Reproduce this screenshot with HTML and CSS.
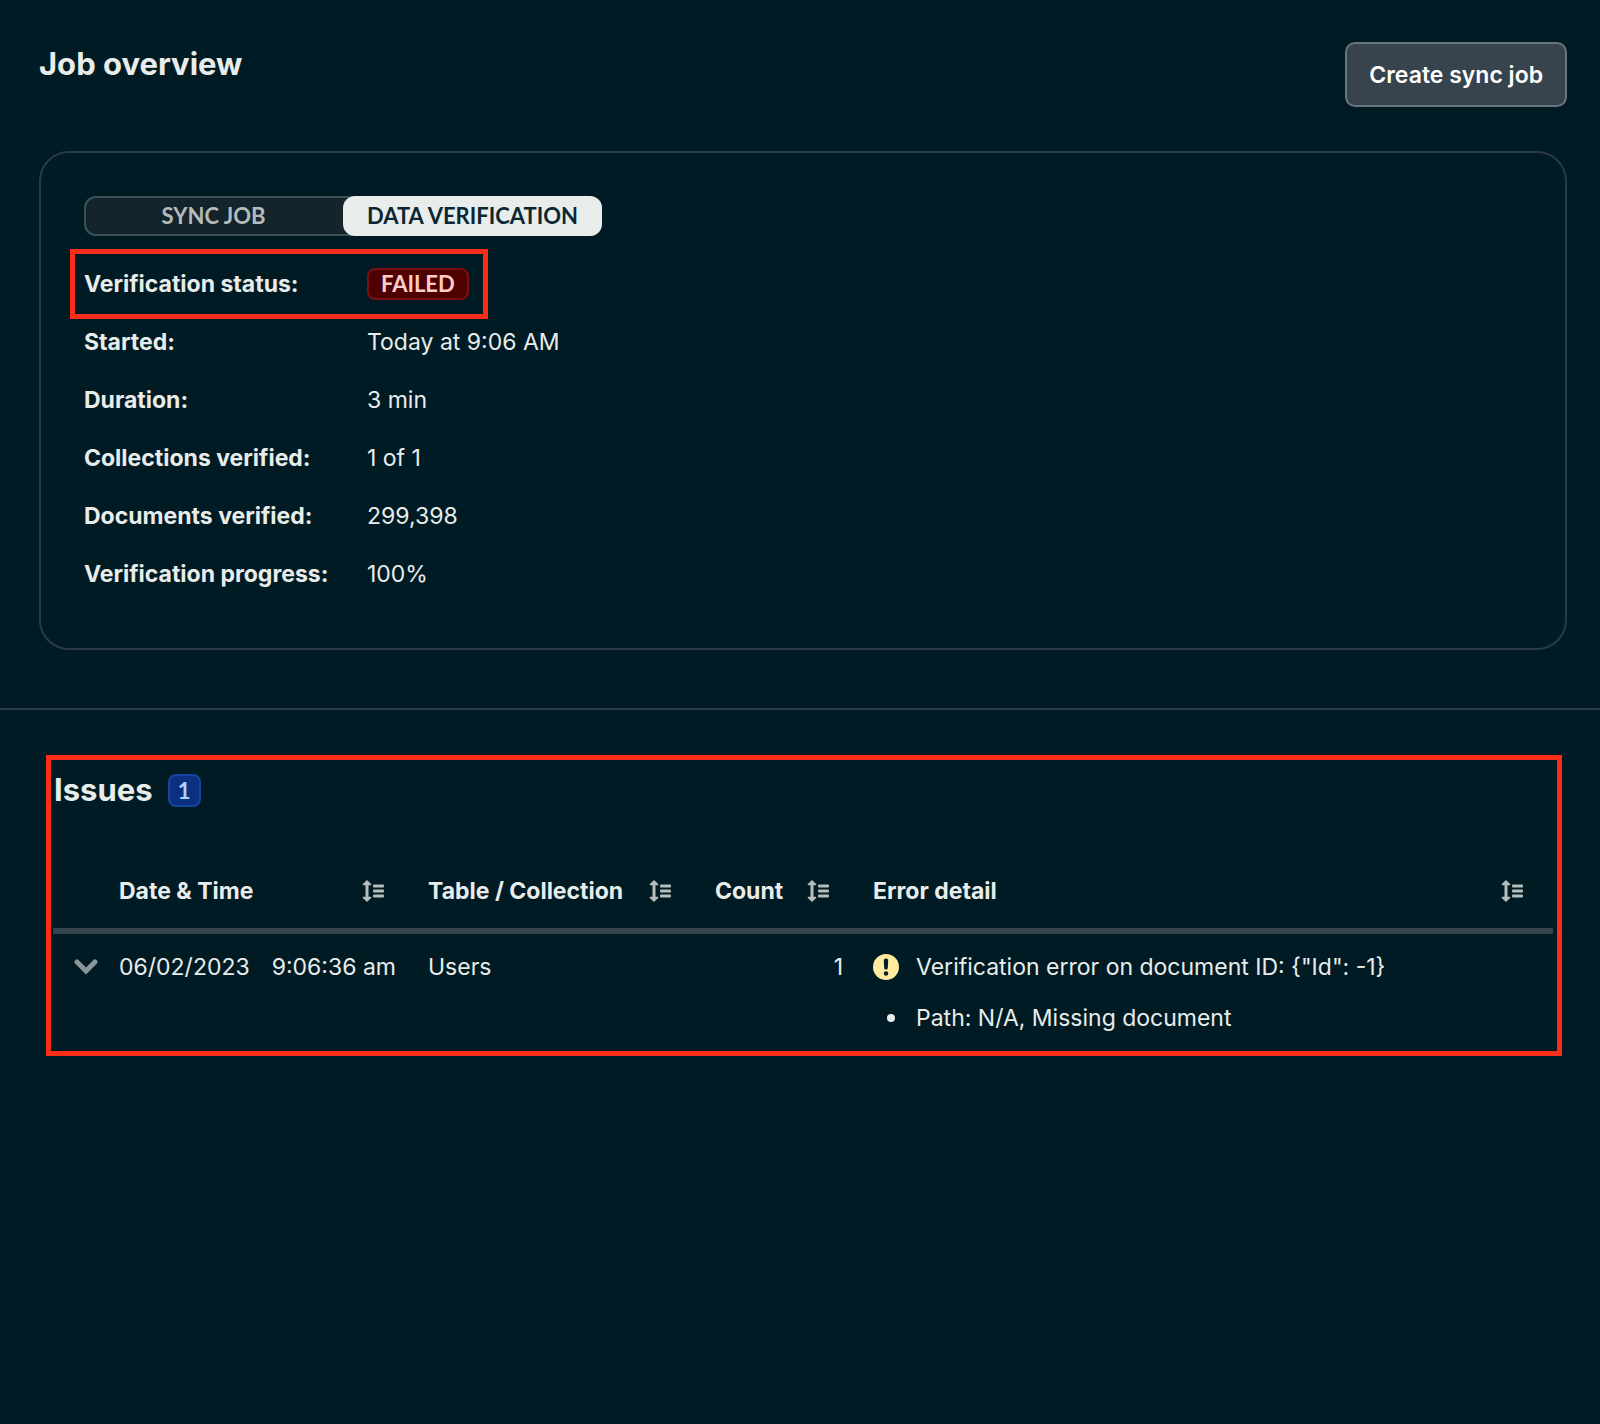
FILE: index.html
```html
<!DOCTYPE html>
<html lang="en">
<head>
<meta charset="utf-8">
<meta name="viewport" content="width=device-width, initial-scale=1">
<title>Job overview</title>
<link rel="stylesheet" href="styles.css">
</head>
<body>
<svg class="sprite" aria-hidden="true">
  <symbol id="sort" viewBox="0 0 22 22">
    <path d="M5 0 9.400 4.300Q9.400 5.200 8.600 5.200H6.500V16.800H8.600Q9.400 16.800 9.400 17.700L5 22 .6 17.700Q.6 16.800 1.400 16.800H3.500V5.200H1.400Q.6 5.200 .6 4.300Z"/>
    <rect x="11" y="4.500" width="11" height="3" rx="1"/>
    <rect x="11" y="9.500" width="11" height="3" rx="1"/>
    <rect x="11" y="14.500" width="11" height="3" rx="1"/>
  </symbol>
</svg>
<main>
  <section class="overview">
    <header class="overview-header">
      <h1>Job overview</h1>
      <button class="primary" type="button">Create sync job</button>
    </header>
    <div class="card">
      <div class="toggle" role="tablist">
        <button type="button" role="tab" aria-selected="false">SYNC JOB</button>
        <button class="active" type="button" role="tab" aria-selected="true">DATA VERIFICATION</button>
      </div>
      <dl class="details">
        <div class="row highlight"><dt>Verification status:</dt><dd><span class="badge failed">FAILED</span></dd></div>
        <div class="row"><dt>Started:</dt><dd>Today at 9:06 AM</dd></div>
        <div class="row"><dt>Duration:</dt><dd>3 min</dd></div>
        <div class="row"><dt>Collections verified:</dt><dd>1 of 1</dd></div>
        <div class="row"><dt>Documents verified:</dt><dd>299,398</dd></div>
        <div class="row"><dt>Verification progress:</dt><dd>100%</dd></div>
      </dl>
    </div>
  </section>
  <section class="issues">
    <header class="issues-header">
      <h2>Issues</h2>
      <span class="badge count">1</span>
    </header>
    <table>
      <colgroup><col class="col-toggle"><col class="col-date"><col class="col-name"><col class="col-count"><col></colgroup>
      <thead>
        <tr>
          <td></td>
          <th scope="col"><div class="head">Date &amp; Time<button type="button" aria-label="Sort by date"><svg><use href="#sort"/></svg></button></div></th>
          <th scope="col"><div class="head">Table / Collection<button type="button" aria-label="Sort by collection"><svg><use href="#sort"/></svg></button></div></th>
          <th scope="col"><div class="head">Count<button type="button" aria-label="Sort by count"><svg><use href="#sort"/></svg></button></div></th>
          <th scope="col"><div class="head">Error detail<button type="button" aria-label="Sort by error"><svg><use href="#sort"/></svg></button></div></th>
        </tr>
      </thead>
      <tbody>
        <tr>
          <td class="expand"><button type="button" aria-label="Collapse row"><svg viewBox="0 0 24 16"><path d="M3 3 12 12 21 3" fill="none" stroke="currentColor" stroke-width="5" stroke-linecap="round"/></svg></button></td>
          <td><div class="stamp"><span>06/02/2023</span><span>9:06:36 am</span></div></td>
          <td>Users</td>
          <td class="number">1</td>
          <td>
            <div class="error">
              <svg class="warning" viewBox="0 0 26 26" aria-hidden="true"><circle cx="13" cy="13" r="13" fill="#ffec9e"/><path d="M10.800 6.500Q10.800 4.500 13 4.500T15.200 6.500L14.800 14Q14.800 15.500 13 15.500T11.200 14Z" fill="#001e2b"/><circle cx="13" cy="19.500" r="2.200" fill="#001e2b"/></svg>
              <span>Verification error on document ID: {"Id": -1}</span>
            </div>
            <ul>
              <li>Path: N/A, Missing document</li>
            </ul>
          </td>
        </tr>
      </tbody>
    </table>
  </section>
</main>
</body>
</html>
```

FILE: styles.css
```css
* { box-sizing: border-box; }

body {
  margin: 0;
  min-height: 100vh;
  background: #011b24;
  color: #e8edeb;
  font: 400 23px/32px Inter, "Liberation Sans", sans-serif;
}

h1, h2, dl, dd, ul { margin: 0; padding: 0; }

h1, h2 {
  font-size: 31px;
  line-height: 44px;
  font-weight: 700;
}

button {
  margin: 0;
  padding: 0;
  border: 0;
  background: none;
  color: inherit;
  font: inherit;
  cursor: pointer;
}

svg { display: block; fill: currentColor; }

.sprite { position: absolute; width: 0; height: 0; }

.overview {
  padding: 42px 33px 58px 39px;
  border-bottom: 2px solid #2b3a44;
}

.overview-header {
  display: flex;
  justify-content: space-between;
  align-items: flex-start;
  margin-bottom: 44px;
}

.primary {
  height: 65px;
  padding: 0 22px;
  border: 2px solid #68767d;
  border-radius: 10px;
  background: #38444d;
  color: #fff;
  font-weight: 600;
}

.card {
  padding: 43px 43px 45px;
  border: 2px solid #2b3a44;
  border-radius: 30px;
}

.toggle {
  display: inline-grid;
  grid-template-columns: 1fr 1fr;
  height: 40px;
  border-radius: 12px;
  background: #14242c;
  box-shadow: inset 0 0 0 2px #3d4f58;
  vertical-align: top;
}

.toggle button {
  padding: 0 24px;
  border-radius: 12px;
  color: #b4bcba;
  font: 700 22px/40px Lato, sans-serif;
}

.toggle .active {
  background: #e8edeb;
  color: #0b2733;
}

.details { padding-top: 19px; }

.row {
  display: grid;
  grid-template-columns: 283px auto;
  align-items: center;
  height: 58px;
}

.row dt { font-weight: 700; }

.highlight {
  width: fit-content;
  margin: 0 -8px;
  padding: 0 13px 0 8px;
  outline: 5px solid #fb2c18;
  outline-offset: 1px;
}

.badge {
  display: block;
  border: 2px solid;
  border-radius: 8px;
  text-align: center;
}

.failed {
  padding: 0 12px;
  border-color: #7a1014;
  background: #4f0000;
  color: #ffcdc7;
  font: 700 22px/28px Lato, sans-serif;
}

.count {
  width: 33px;
  border-color: #1446a3;
  background: #0c2f7f;
  color: #a8d4ff;
  font: 700 22px/29px Lato, sans-serif;
}

.issues {
  margin: 45px 38px 45px 46px;
  padding: 8px 4px 17px 2px;
  border: 5px solid #fb2c18;
}

.issues-header {
  display: flex;
  align-items: center;
  gap: 15px;
  padding-left: 1px;
  height: 44px;
}

table {
  width: 100%;
  margin-top: 42px;
  border-collapse: collapse;
  table-layout: fixed;
}

.col-toggle { width: 52px; }
.col-date { width: 309px; }
.col-name { width: 287px; }
.col-count { width: 158px; }

thead tr { border-bottom: 6px solid #35434d; }

th {
  height: 77px;
  padding: 0 30px 0 14px;
  font-weight: 700;
  text-align: left;
  white-space: nowrap;
}

.head {
  display: flex;
  justify-content: space-between;
  align-items: center;
}

.head button { color: #b6bebc; }

.head svg { width: 22px; height: 22px; }

tbody td {
  padding: 17px 0 0 14px;
  vertical-align: top;
  white-space: nowrap;
}

tbody .expand { padding-left: 21px; color: #89979b; }

.expand button { display: flex; align-items: center; height: 32px; }

.expand svg { width: 24px; height: 16px; }

.stamp { display: flex; gap: 22px; }

tbody .number { padding-right: 16px; text-align: right; }

.error {
  display: flex;
  align-items: center;
  gap: 17px;
}

.warning { width: 26px; height: 26px; }

ul { margin-top: 19px; list-style: none; }

li { display: flex; align-items: center; }

li::before {
  content: "";
  width: 8px;
  height: 8px;
  margin: 0 21px 0 14px;
  border-radius: 50%;
  background: #e8edeb;
}
```
